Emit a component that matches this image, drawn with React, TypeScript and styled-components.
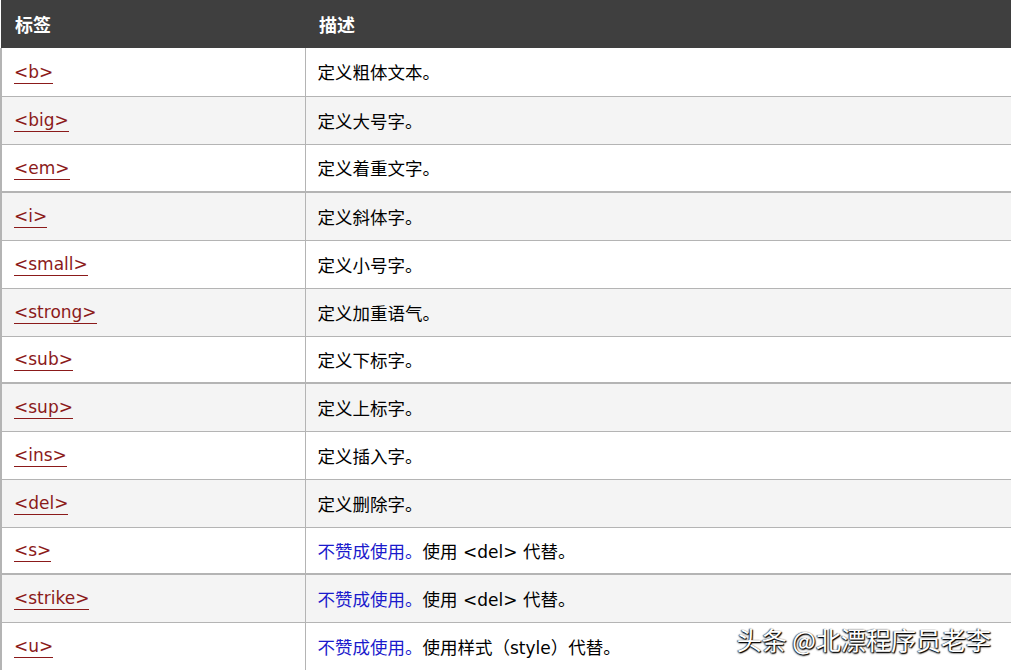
import React from "react";
import styled, { createGlobalStyle } from "styled-components";

const Global = createGlobalStyle`
  html, body { margin: 0; padding: 0; background: #fff; }
  body { font-family: "DejaVu Sans", "Noto Sans CJK SC", sans-serif; overflow: hidden; }
`;

const Page = styled.div`
  position: relative;
  width: 1011px;
  height: 670px;
  overflow: hidden;
`;

const Table = styled.table`
  width: 1011px;
  border-collapse: collapse;
  table-layout: fixed;
  font-size: 17px;
`;

const HeadCell = styled.th<{ $w?: number }>`
  background: #3f3f3f;
  color: #fff;
  height: 48px;
  padding: 0 0 0 14px;
  text-align: left;
  font-weight: bold;
  font-size: 18px;
  font-family: "Noto Sans CJK SC", sans-serif;
  ${(p) => (p.$w ? `width: ${p.$w}px;` : "")}
  box-sizing: border-box;
`;

const Row = styled.tr<{ $alt: boolean; $thick: boolean; $short: boolean }>`
  background: ${(p) => (p.$alt ? "#f4f4f4" : "#fff")};
  & > td {
    height: ${(p) => (p.$short ? "47px" : "48px")};
    border-bottom: ${(p) => (p.$thick ? "2px" : "1px")} solid #b4b4b4;
  }
`;

const TagCell = styled.td`
  padding: 0 0 0 12px;
  border-left: 2px solid #b4b4b4;
  border-right: 1px solid #b4b4b4;
  box-sizing: border-box;
`;

const DescCell = styled.td`
  padding: 0 0 0 12px;
  color: #000;
  font-size: 17.5px;
  box-sizing: border-box;
  font-family: "DejaVu Sans", "Noto Sans CJK SC", sans-serif;
`;

const Code = styled.span`
  font-size: 17px;
`;

const TagLink = styled.a`
  color: #8b1a1a;
  text-decoration: none;
  border-bottom: 1px solid #8b1a1a;
  padding-bottom: 1px;
`;

const Deprecated = styled.span`
  color: #1a1acc;
`;

const Watermark = styled.div`
  position: absolute;
  right: 20px;
  bottom: 13px;
  font-family: "Noto Sans CJK SC", sans-serif;
  font-size: 25px;
  color: #fff;
  text-shadow: 1px 1px 1px #000, -1px 0 1px rgba(0,0,0,0.6), 0 1px 2px #000;
`;

type Item = { tag: string; desc: React.ReactNode };

const items: Item[] = [
  { tag: "<b>", desc: "定义粗体文本。" },
  { tag: "<big>", desc: "定义大号字。" },
  { tag: "<em>", desc: "定义着重文字。" },
  { tag: "<i>", desc: "定义斜体字。" },
  { tag: "<small>", desc: "定义小号字。" },
  { tag: "<strong>", desc: "定义加重语气。" },
  { tag: "<sub>", desc: "定义下标字。" },
  { tag: "<sup>", desc: "定义上标字。" },
  { tag: "<ins>", desc: "定义插入字。" },
  { tag: "<del>", desc: "定义删除字。" },
  {
    tag: "<s>",
    desc: (
      <>
        <Deprecated>不赞成使用。</Deprecated>使用 <Code>&lt;del&gt;</Code> 代替。
      </>
    ),
  },
  {
    tag: "<strike>",
    desc: (
      <>
        <Deprecated>不赞成使用。</Deprecated>使用 <Code>&lt;del&gt;</Code> 代替。
      </>
    ),
  },
  {
    tag: "<u>",
    desc: (
      <>
        <Deprecated>不赞成使用。</Deprecated>使用样式（<Code>style</Code>）代替。
      </>
    ),
  },
];

export default function App() {
  return (
    <Page>
      <Global />
      <Table>
        <thead>
          <tr>
            <HeadCell $w={304}>标签</HeadCell>
            <HeadCell>描述</HeadCell>
          </tr>
        </thead>
        <tbody>
          {items.map((it, i) => (
            <Row
              key={it.tag}
              $alt={i % 2 === 1}
              $thick={i === 2 || i === 6 || i === 10}
              $short={i === 6 || i === 10}
            >
              <TagCell>
                <TagLink href="#">{it.tag}</TagLink>
              </TagCell>
              <DescCell>{it.desc}</DescCell>
            </Row>
          ))}
        </tbody>
      </Table>
      <Watermark>头条 @北漂程序员老李</Watermark>
    </Page>
  );
}
